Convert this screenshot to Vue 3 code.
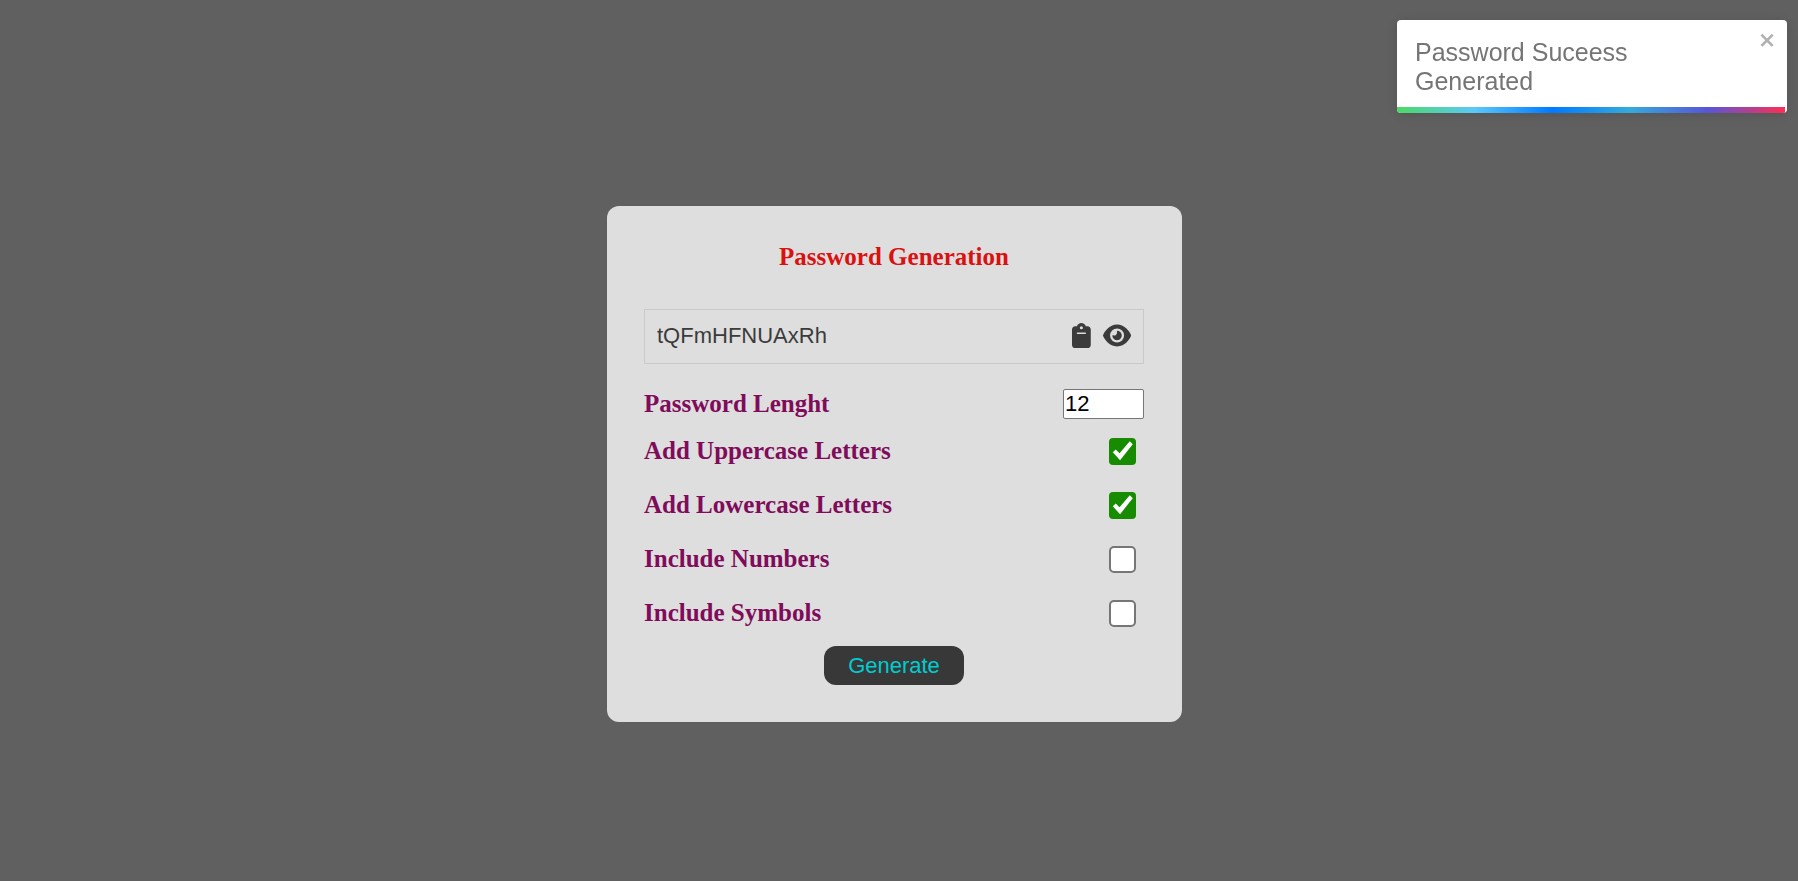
<script setup>
import { ref, reactive } from 'vue'

const password = ref('tQFmHFNUAxRh')
const length = ref(12)
const visible = ref(true)
const toastOpen = ref(true)
const options = reactive([
  { id: 'uppercase', label: 'Add Uppercase Letters', checked: true, chars: 'ABCDEFGHIJKLMNOPQRSTUVWXYZ' },
  { id: 'lowercase', label: 'Add Lowercase Letters', checked: true, chars: 'abcdefghijklmnopqrstuvwxyz' },
  { id: 'numbers', label: 'Include Numbers', checked: false, chars: '0123456789' },
  { id: 'symbols', label: 'Include Symbols', checked: false, chars: '!@#$%^&*()_+' }
])

function generate() {
  const pool = options.filter(o => o.checked).map(o => o.chars).join('')
  if (!pool) return
  password.value = Array.from({ length: length.value }, () => pool[Math.floor(Math.random() * pool.length)]).join('')
  toastOpen.value = true
}

function copy() {
  navigator.clipboard?.writeText(password.value)
}
</script>

<template>
  <div class="page">
    <main class="card">
      <h1 class="title">Password Generation</h1>

      <div class="result">
        <input class="password" :type="visible ? 'text' : 'password'" :value="password" readonly aria-label="Generated password" />
        <button class="icon-button" type="button" aria-label="Copy password" @click="copy">
          <svg class="icon" viewBox="0 0 384 512" aria-hidden="true">
            <path d="M192 0c-41.8 0-77.4 26.7-90.5 64H64C28.7 64 0 92.7 0 128V448c0 35.3 28.7 64 64 64H320c35.3 0 64-28.7 64-64V128c0-35.3-28.7-64-64-64H282.5C269.4 26.7 233.8 0 192 0zm0 64a32 32 0 1 1 0 64 32 32 0 1 1 0-64zM112 192H272c8.8 0 16 7.2 16 16s-7.2 16-16 16H112c-8.8 0-16-7.2-16-16s7.2-16 16-16z" />
          </svg>
        </button>
        <button class="icon-button" type="button" aria-label="Show or hide password" @click="visible = !visible">
          <svg class="icon" viewBox="0 0 576 512" aria-hidden="true">
            <path d="M288 32c-80.8 0-145.5 36.8-192.6 80.6C48.6 156 17.3 208 2.5 243.7c-3.3 7.9-3.3 16.7 0 24.6C17.3 304 48.6 356 95.4 399.4C142.5 443.2 207.2 480 288 480s145.5-36.8 192.6-80.6c46.8-43.5 78.1-95.4 93-131.1c3.3-7.9 3.3-16.7 0-24.6c-14.9-35.7-46.2-87.7-93-131.1C433.5 68.8 368.8 32 288 32zM144 256a144 144 0 1 1 288 0 144 144 0 1 1 -288 0zm144-64c0 35.3-28.7 64-64 64c-7.1 0-13.9-1.2-20.3-3.3c-5.5-1.8-11.9 1.6-11.7 7.4c.3 6.9 1.3 13.8 3.2 20.7c13.7 51.2 66.4 81.6 117.6 67.9s81.6-66.4 67.9-117.6c-11.1-41.5-47.8-69.4-88.6-71.1c-5.8-.2-9.2 6.1-7.4 11.7c2.1 6.4 3.3 13.2 3.3 20.3z" />
          </svg>
        </button>
      </div>

      <div class="row row-length">
        <label class="label" for="length">Password Lenght</label>
        <input id="length" v-model.number="length" class="number" type="number" min="4" max="20" />
      </div>

      <div v-for="option in options" :key="option.id" class="row row-option">
        <label class="label" :for="option.id">{{ option.label }}</label>
        <input :id="option.id" v-model="option.checked" class="checkbox" type="checkbox" />
      </div>

      <button class="generate" type="button" @click="generate">Generate</button>
    </main>

    <div v-if="toastOpen" class="toast" role="alert">
      <p class="toast-text">Password Suceess Generated</p>
      <button class="toast-close" type="button" aria-label="close" @click="toastOpen = false">
        <svg class="close-icon" viewBox="0 0 14 16" aria-hidden="true">
          <path fill-rule="evenodd" d="M7.71 8.23l3.75 3.75-1.48 1.48-3.75-3.75-3.75 3.75L1 11.98l3.75-3.75L1 4.48 2.48 3l3.75 3.75L9.98 3l1.48 1.48-3.75 3.75z" />
        </svg>
      </button>
      <div class="toast-progress"></div>
    </div>
  </div>
</template>

<style>
body {
  margin: 0;
  background: #606060;
}
</style>

<style scoped>
.page {
  box-sizing: border-box;
  min-height: 100vh;
  padding: 47px 9px 0 0;
  display: flex;
  align-items: center;
  justify-content: center;
  font-family: "Liberation Serif", "Times New Roman", serif;
}

.card {
  box-sizing: border-box;
  width: 100%;
  max-width: 575px;
  padding: 37px 38px 37px 37px;
  display: flex;
  flex-direction: column;
  border-radius: 12px;
  background: #dedede;
}

.title {
  margin: 0 0 38px;
  font-size: 25px;
  line-height: 28px;
  text-align: center;
  color: #d91111;
}

.result {
  box-sizing: border-box;
  height: 55px;
  padding: 0 12px 2px;
  display: flex;
  align-items: center;
  gap: 12px;
  border: 1px solid #c9c9c9;
}

.password {
  flex: 1;
  min-width: 0;
  padding: 0;
  border: 0;
  outline: 0;
  background: transparent;
  font: 22px "Liberation Sans", Arial, sans-serif;
  color: #3b3b3b;
}

.icon-button {
  padding: 0;
  display: flex;
  border: 0;
  background: transparent;
  color: #3b3b3b;
  cursor: pointer;
}

.icon {
  height: 25px;
  fill: currentColor;
}

.row {
  display: flex;
  align-items: center;
  justify-content: space-between;
}

.row-length {
  height: 30px;
  margin: 25px 0 5px;
}

.row-option {
  height: 54px;
}

.label {
  font-size: 25px;
  line-height: 28px;
  font-weight: bold;
  color: #800b5b;
}

.number {
  box-sizing: border-box;
  width: 81px;
  height: 30px;
  padding: 1px;
  border: 1px solid #767676;
  border-radius: 2px;
  background: #fff;
  font: 22px "Liberation Sans", Arial, sans-serif;
  color: #000;
}

.checkbox {
  appearance: none;
  box-sizing: border-box;
  width: 27px;
  height: 27px;
  margin: 0 8px 0 0;
  display: grid;
  border: 2px solid #767676;
  border-radius: 5px;
  background: #fff;
}

.checkbox:checked {
  border: 0;
  border-radius: 4px;
  background: #188c00;
}

.checkbox:checked::after {
  content: "";
  background: #fff;
  clip-path: polygon(14% 55%, 25% 44%, 39% 58%, 77% 14%, 88% 25%, 41% 84%);
}

.generate {
  width: 140px;
  height: 39px;
  margin: 6px auto 0;
  padding: 0;
  border: 0;
  border-radius: 12px;
  background: #383838;
  font: 22px "Liberation Sans", Arial, sans-serif;
  color: #00cccf;
  cursor: pointer;
}

.toast {
  position: fixed;
  top: 20px;
  right: 11px;
  box-sizing: border-box;
  width: 390px;
  min-height: 93px;
  padding: 18px 12px 17px 18px;
  display: flex;
  align-items: flex-start;
  border-radius: 4px;
  overflow: hidden;
  background: #fff;
  box-shadow: 0 1px 10px rgba(0, 0, 0, 0.1), 0 2px 15px rgba(0, 0, 0, 0.05);
  font-family: "Liberation Sans", Arial, sans-serif;
}

.toast-text {
  flex: 1;
  margin: 0;
  padding-right: 96px;
  font-size: 25px;
  line-height: 29px;
  color: #757575;
}

.toast-close {
  position: absolute;
  top: 10px;
  right: 10px;
  padding: 0;
  display: flex;
  border: 0;
  background: transparent;
  color: #000;
  opacity: 0.3;
  cursor: pointer;
}

.close-icon {
  width: 18px;
  height: 20px;
  fill: currentColor;
}

.toast-progress {
  position: absolute;
  left: 0;
  right: 2px;
  bottom: 0;
  height: 6px;
  background: linear-gradient(to right, #4cd964, #5ac8fa, #007aff, #34aadc, #5856d6, #ff2d55);
}
</style>
